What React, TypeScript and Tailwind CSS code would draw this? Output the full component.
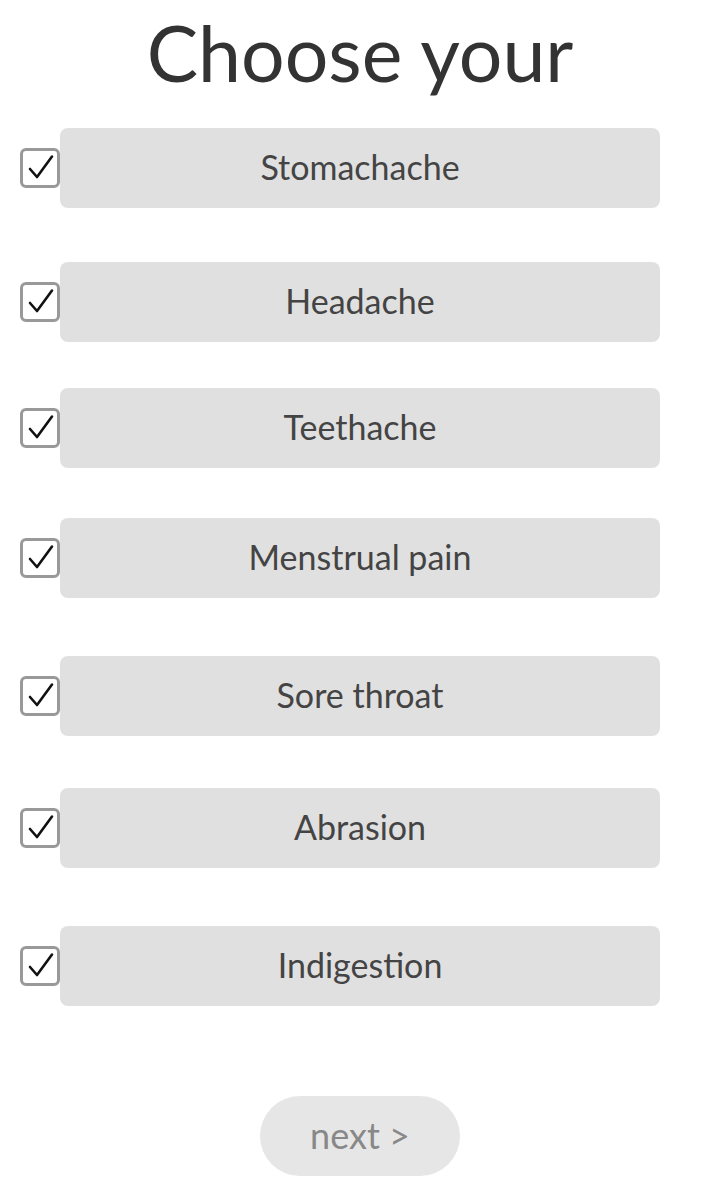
import React from 'react'

const items = [
    { label: 'Stomachache', cls: 'mt-0' },
    { label: 'Headache', cls: 'mt-[54px]' },
    { label: 'Teethache', cls: 'mt-[46px]' },
    { label: 'Menstrual pain', cls: 'mt-[50px]' },
    { label: 'Sore throat', cls: 'mt-[58px]' },
    { label: 'Abrasion', cls: 'mt-[52px]' },
    { label: 'Indigestion', cls: 'mt-[58px]' },
];

const Check: React.FC = () => (
    <div className="w-[40px] h-[40px] flex-none rounded-[6px] border-[3px] border-[#999] bg-white flex items-center justify-center">
        <svg width="28" height="28" viewBox="0 0 28 28" fill="none">
            <path d="M4 15 L11 23 L26 2.5" stroke="#111" strokeWidth="2.6" strokeLinecap="round" strokeLinejoin="round" />
        </svg>
    </div>
);

const App: React.FC = () => {
    return (
        <div className="w-[720px] h-[1200px] bg-white flex flex-col items-center" style={{ fontFamily: 'Lato, "Noto Sans", sans-serif' }}>
            {/* title */}
            <h1 className="h-[128px] pt-[4px] text-[77px] leading-[96px] text-[#333] text-center">Choose your</h1>

            {/* symptom rows */}
            <div className="w-full flex flex-col pl-[20px]">
                {items.map((it) => (
                    <div key={it.label} className={`flex items-center ${it.cls}`}>
                        <Check />
                        <div className="w-[600px] h-[80px] pb-[3px] rounded-[8px] bg-[#e0e0e0] flex items-center justify-center text-[34px] text-[#444]">
                            {it.label}
                        </div>
                    </div>
                ))}
            </div>

            <button className="mt-[90px] w-[200px] h-[80px] rounded-full bg-[#e6e6e6] text-[36px] text-[#888] flex items-center justify-center pb-[3px]">
                next &gt;
            </button>
        </div>
    );
};

export default App;
